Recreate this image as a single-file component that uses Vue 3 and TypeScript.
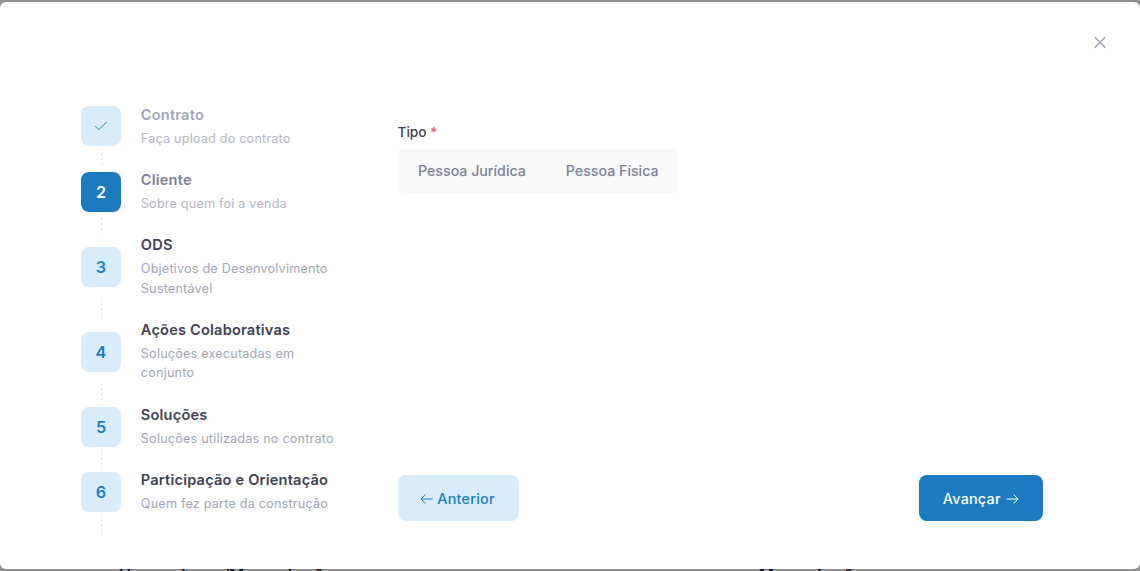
<script setup lang="ts">
interface Step {
  title: string
  desc: string
  state: 'completed' | 'current' | 'pending'
}

const steps: Step[] = [
  { title: 'Contrato', desc: 'Faça upload do contrato', state: 'completed' },
  { title: 'Cliente', desc: 'Sobre quem foi a venda', state: 'current' },
  { title: 'ODS', desc: 'Objetivos de Desenvolvimento Sustentável', state: 'pending' },
  { title: 'Ações Colaborativas', desc: 'Soluções executadas em conjunto', state: 'pending' },
  { title: 'Soluções', desc: 'Soluções utilizadas no contrato', state: 'pending' },
  { title: 'Participação e Orientação', desc: 'Quem fez parte da construção', state: 'pending' },
]
const types: string[] = ['Pessoa Jurídica', 'Pessoa Física']
</script>

<template>
  <div class="page">
    <div class="behind">
      <span class="heading first">Honorado em/Mensuda ção</span>
      <span class="heading second">Mensuda ção</span>
    </div>
    <main class="modal">
      <button class="close" aria-label="Fechar">
        <svg width="14" height="14" viewBox="0 0 14 14"><path d="M1.7 2L12.3 12.6M12.3 2L1.7 12.6" /></svg>
      </button>
      <nav class="steps">
        <div v-for="(step, i) in steps" :key="step.title" class="step" :class="step.state">
          <div class="wrapper">
            <div class="badge">
              <svg v-if="step.state === 'completed'" width="14" height="12" viewBox="0 0 14 12">
                <path d="M1.3 6.2L4.8 9.8L12.6 2" />
              </svg>
              <template v-else>{{ i + 1 }}</template>
            </div>
            <div class="label">
              <h3>{{ step.title }}</h3>
              <p>{{ step.desc }}</p>
            </div>
          </div>
          <div class="line"></div>
        </div>
      </nav>
      <section class="content">
        <div class="field">
          <div class="field-label">Tipo <span class="required">*</span></div>
          <div class="options">
            <button v-for="type in types" :key="type" class="option">{{ type }}</button>
          </div>
        </div>
        <footer class="actions">
          <button class="btn light">
            <svg width="13" height="12" viewBox="0 0 13 12"><path d="M12.5 6H1M5.4 1.5L1 6L5.4 10.5" /></svg>
            <span>Anterior</span>
          </button>
          <button class="btn primary">
            <span>Avançar</span>
            <svg width="13" height="12" viewBox="0 0 13 12"><path d="M.5 6H12M7.6 1.5L12 6L7.6 10.5" /></svg>
          </button>
        </footer>
      </section>
    </main>
  </div>
</template>

<style>
html,
body {
  overflow: hidden;
}
</style>

<style scoped>
* {
  box-sizing: border-box;
}
.page {
  position: relative;
  height: 571px;
  padding: 2px 0;
  overflow: hidden;
  background: #919191;
  font-family: Inter, "Liberation Sans", sans-serif;
  font-size: 13px;
}
button {
  font-family: inherit;
  border: 0;
  padding: 0;
}
.modal {
  position: relative;
  display: flex;
  height: 567px;
  background: #fff;
  border-radius: 6px;
}
.behind {
  position: absolute;
  inset: 0;
  overflow: hidden;
}
.heading {
  position: absolute;
  top: 563px;
  font-size: 16px;
  line-height: 24px;
  font-weight: 600;
  color: #0a0a24;
  white-space: nowrap;
}
.first {
  left: 119px;
}
.second {
  left: 759px;
}
.close {
  position: absolute;
  top: 33px;
  right: 33px;
  width: 14px;
  height: 14px;
  background: none;
}
svg {
  display: block;
  flex: none;
  fill: none;
  stroke: currentColor;
}
.close svg {
  color: #a1a5b7;
  stroke-width: 1.5;
}
.steps {
  width: 398px;
  flex: none;
  padding: 101.8px 60px 0 81px;
}
.wrapper {
  display: flex;
  align-items: center;
}
.badge {
  display: flex;
  align-items: center;
  justify-content: center;
  flex: none;
  width: 40px;
  height: 40px;
  margin-right: 19.8px;
  border-radius: 8px;
  background: #d9ecfc;
  color: #1b7dc3;
  font-size: 16.25px;
  font-weight: 600;
}
.current .badge {
  background: #1a7bc0;
  color: #fff;
}
h3 {
  margin: 0 0 2.3px;
  font-size: 14.6px;
  letter-spacing: 0.19px;
  line-height: 22.4px;
  font-weight: 600;
  color: #3f4254;
}
.completed h3 {
  color: #a1a5b7;
}
.current h3 {
  color: #7e8299;
}
p {
  margin: 0 0 1.1px;
  font-size: 12.7px;
  letter-spacing: 0.17px;
  line-height: 19.5px;
  color: #a1a5b7;
}
.completed p,
.current p {
  color: #b5b5c3;
}
.line {
  width: 1px;
  height: 20px;
  margin-left: 20px;
  background: repeating-linear-gradient(to bottom, #dcdee7 0 1px, transparent 1px 4px, #dcdee7 4px 5px);
}
.content {
  display: flex;
  flex-direction: column;
  justify-content: space-between;
  width: 645px;
  padding: 120px 0 48px;
}
.field-label {
  margin-left: -0.5px;
  font-size: 13.65px;
  line-height: 20px;
  font-weight: 500;
  color: #3f4254;
}
.required {
  color: #f64e60;
}
.options {
  display: inline-flex;
  gap: 40px;
  height: 44px;
  margin-top: 7px;
  padding: 0 20px;
  border-radius: 6px;
  background: #f9f9f9;
}
.option {
  padding-bottom: 2px;
  background: none;
  color: #7e8299;
  font-size: 14.2px;
  font-weight: 500;
}
.actions {
  display: flex;
  justify-content: space-between;
}
.btn {
  display: flex;
  align-items: center;
  justify-content: center;
  height: 46px;
  border-radius: 8px;
  font-size: 14.4px;
  letter-spacing: 0.2px;
  font-weight: 500;
}
.btn svg {
  position: relative;
  top: 1px;
}
.light {
  width: 121px;
  gap: 4px;
  padding-right: 2px;
  background: #d9ecfc;
  color: #1b7dc3;
}
.primary {
  width: 124px;
  gap: 5.5px;
  background: #1a7bc0;
  color: #fff;
}
</style>
